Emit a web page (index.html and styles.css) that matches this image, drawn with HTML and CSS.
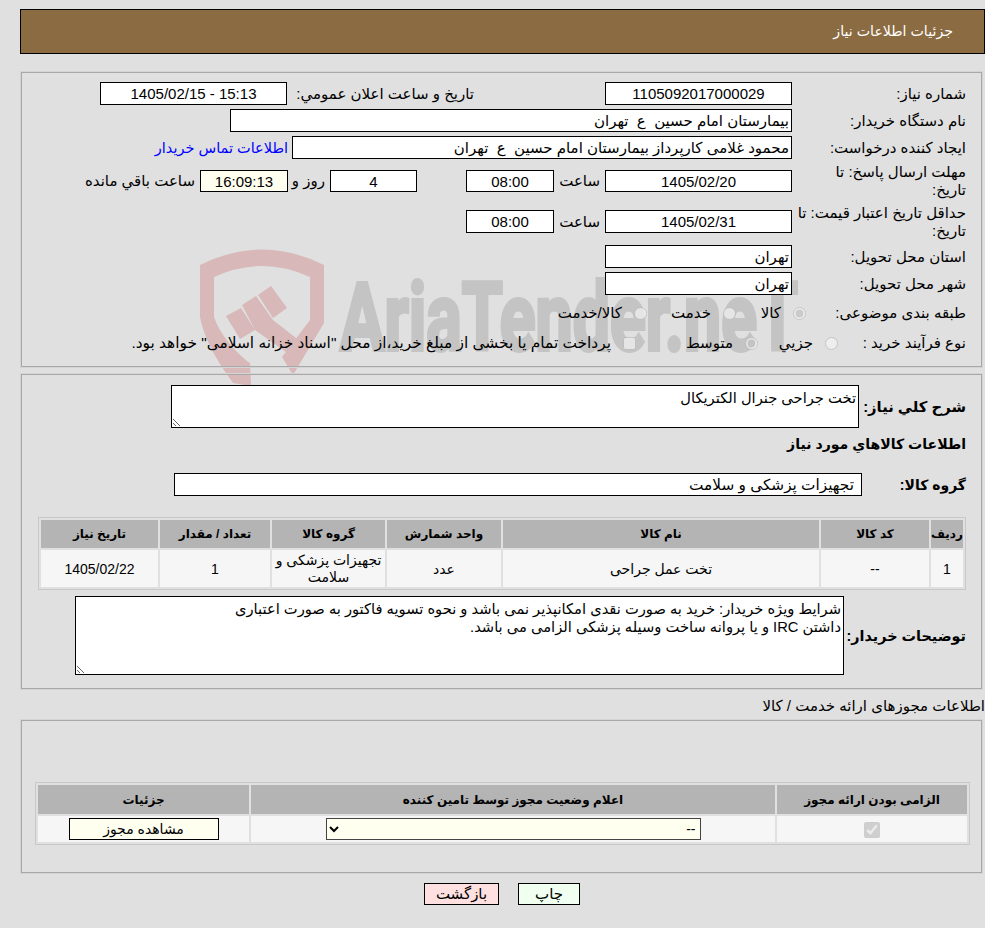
FILE: index.html
```html
<!DOCTYPE html>
<html lang="fa" dir="rtl">
<head>
<meta charset="utf-8">
<title>جزئیات اطلاعات نیاز</title>
<link rel="stylesheet" href="styles.css">
</head>
<body>
<div class="page">
  <svg class="watermark" width="985" height="400" viewBox="0 0 985 400" aria-hidden="true">
    <path class="wm-red" d="M200 265 Q262 234 324 265 V323 L293 375 L282 357 L310 320 V277 Q262 255 214 277 V317 Q222 340 248 362 L250 363 L251 386 L233 383 Q205 345 200 317 Z"/>
    <path class="wm-red" d="M226 316 L241 308 L255 330 L240 339 Z M258 295 L271 286 L287 308 L273 318 Z M242 305 L256 296 L273 320 L305 345 L293 357 L255 330 Z"/>
    <text class="wm-text" x="340" y="350" textLength="458" lengthAdjust="spacingAndGlyphs" direction="ltr">AriaTender.neT</text>
  </svg>

  <header class="title-bar">جزئيات اطلاعات نياز</header>

  <section class="panel panel-main">
    <div class="row row-a">
      <span class="lbl">شماره نياز:</span>
      <input class="fld w187" value="1105092017000029" readonly>
      <span class="lbl-public">تاريخ و ساعت اعلان عمومي:</span>
      <input class="fld w187" value="15:13 - 1405/02/15" readonly>
    </div>
    <div class="row row-b">
      <span class="lbl">نام دستگاه خريدار:</span>
      <input class="fld fld-start w562" value="بیمارستان امام حسین  ع  تهران" readonly>
    </div>
    <div class="row row-b">
      <span class="lbl">ایجاد کننده درخواست:</span>
      <input class="fld fld-start w500" value="محمود غلامی کارپرداز بیمارستان امام حسین  ع  تهران" readonly>
      <a class="contact" href="#">اطلاعات تماس خريدار</a>
    </div>
    <div class="row row-c">
      <span class="lbl">مهلت ارسال پاسخ: تا<br>تاريخ:</span>
      <input class="fld w187" value="1405/02/20" readonly>
      <span class="hour">ساعت</span>
      <input class="fld w88" value="08:00" readonly>
      <input class="fld w87 gap-days" value="4" readonly>
      <span class="days">روز و</span>
      <input class="fld w88 timer" value="16:09:13" readonly>
      <span class="remain">ساعت باقي مانده</span>
    </div>
    <div class="row row-d">
      <span class="lbl">حداقل تاريخ اعتبار قيمت: تا<br>تاريخ:</span>
      <input class="fld w187" value="1405/02/31" readonly>
      <span class="hour">ساعت</span>
      <input class="fld w88" value="08:00" readonly>
    </div>
    <div class="row row-e">
      <span class="lbl">استان محل تحويل:</span>
      <input class="fld fld-start w187" value="تهران" readonly>
    </div>
    <div class="row row-b">
      <span class="lbl">شهر محل تحويل:</span>
      <input class="fld fld-start w187" value="تهران" readonly>
    </div>
    <div class="row row-f">
      <span class="lbl lbl-cat">طبقه بندی موضوعی:</span>
      <label class="opt w70"><input type="radio" name="cat" checked disabled>کالا</label>
      <label class="opt w89"><input type="radio" name="cat" disabled>خدمت</label>
      <label class="opt"><input type="radio" name="cat" disabled>کالا/خدمت</label>
    </div>
    <div class="row row-g">
      <span class="lbl lbl-short">نوع فرآیند خرید :</span>
      <label class="opt w80"><input type="radio" name="proc" disabled>جزيي</label>
      <label class="opt w122"><input type="radio" name="proc" checked disabled>متوسط</label>
      <label class="opt opt-long"><input type="checkbox" disabled>پرداخت تمام یا بخشی از مبلغ خرید،از محل "اسناد خزانه اسلامی" خواهد بود.</label>
    </div>
  </section>

  <section class="panel panel-goods">
    <div class="row-area">
      <span class="lbl-bold col107">شرح كلي نياز:</span>
      <textarea class="area area-desc" readonly>تخت جراحی جنرال الکتریکال</textarea>
    </div>
    <div class="heading">اطلاعات كالاهاي مورد نياز</div>
    <div class="row-group">
      <span class="lbl-bold col104">گروه کالا:</span>
      <input class="fld fld-group" value="تجهیزات پزشکی و سلامت" readonly>
    </div>
    <table class="grid grid-goods">
      <thead>
        <tr>
          <th class="c32">ردیف</th>
          <th class="c108">کد کالا</th>
          <th class="c316">نام کالا</th>
          <th class="c114">واحد شمارش</th>
          <th class="c113">گروه کالا</th>
          <th class="c110">تعداد / مقدار</th>
          <th class="c117">تاریخ نیاز</th>
        </tr>
      </thead>
      <tbody>
        <tr>
          <td>1</td>
          <td>--</td>
          <td>تخت عمل جراحی</td>
          <td>عدد</td>
          <td>تجهیزات پزشکی و سلامت</td>
          <td>1</td>
          <td>1405/02/22</td>
        </tr>
      </tbody>
    </table>
    <div class="row-notes">
      <span class="lbl-bold col122">توضیحات خریدار:</span>
      <textarea class="area area-notes" readonly>شرایط ویژه خریدار: خرید به صورت نقدی امکانپذیر نمی باشد و نحوه تسویه فاکتور به صورت اعتباری
داشتن IRC و یا پروانه ساخت وسیله پزشکی الزامی می باشد.</textarea>
    </div>
  </section>

  <div class="section-label">اطلاعات مجوزهای ارائه خدمت / کالا</div>

  <section class="panel panel-license">
    <table class="grid grid-license">
      <thead>
        <tr>
          <th class="c190">الزامی بودن ارائه مجوز</th>
          <th class="c524">اعلام وضعیت مجوز توسط تامین کننده</th>
          <th class="c211">جزئیات</th>
        </tr>
      </thead>
      <tbody>
        <tr>
          <td><input type="checkbox" checked disabled></td>
          <td><select class="status"><option>--</option></select></td>
          <td><button class="btn btn-view" type="button">مشاهده مجوز</button></td>
        </tr>
      </tbody>
    </table>
  </section>

  <div class="actions">
    <button class="btn btn-print" type="button">چاپ</button>
    <button class="btn btn-back" type="button">بازگشت</button>
  </div>
</div>
</body>
</html>
```
FILE: styles.css
```css
* { box-sizing: border-box; }
html, body { margin: 0; padding: 0; background: #e0e0e0; }
body {
  font-family: "Liberation Sans", "DejaVu Sans", sans-serif;
  font-size: 15px;
  color: #000;
  overflow: hidden;
}
.page { position: relative; width: 985px; height: 928px; padding-top: 9px; }
.watermark { position: absolute; left: 0; top: 0; z-index: 0; }
.wm-red { fill: #d8b8b8; }
.wm-text {
  font-family: "Roboto", sans-serif;
  font-weight: 700;
  font-size: 94px;
  fill: #c4c4c4;
  stroke: #c4c4c4;
  stroke-width: 4px;
}
.title-bar {
  position: relative;
  z-index: 1;
  height: 45px;
  width: 965px;
  margin-left: 20px;
  padding-right: 31px;
  background: #8b6b41;
  border: 1px solid #000;
  color: #fff;
  line-height: 43px;
  font-size: 14.2px;
}
.panel {
  position: relative;
  z-index: 1;
  width: 961px;
  margin-right: 3px;
  margin-left: 21px;
  border: 1px solid #a8a8a8;
  box-shadow: 0 0 0 1px #d4d4d4;
}
.panel-main { height: 295px; margin-top: 18px; padding: 9px 14px 0 0; }
.panel-goods { height: 315px; margin-top: 7px; padding: 10px 14px 0 0; }
.panel-license { height: 153px; padding: 61px 11px 0 0; }

.row { display: flex; align-items: center; height: 23px; }
.row-b { margin-top: 4px; }
.row-c { margin-top: 11px; height: 22px; }
.row-d { margin-top: 18px; }
.row-e { margin-top: 12px; }
.row-f { margin-top: 6px; height: 24px; }
.row-g { margin-top: 6px; height: 24px; }
.lbl { width: 175px; flex: none; padding: 0 1px 0 0; line-height: 18px; }
.lbl-cat { width: 160px; }
.lbl-short { width: 128px; }
.lbl-public { width: 187px; margin-right: 131px; flex: none; }

.fld {
  height: 100%;
  border: 1px solid #000;
  background: #fff;
  color: #000;
  font: inherit;
  text-align: center;
  padding: 0 2px;
  margin: 0;
  outline: none;
  border-radius: 0;
  flex: none;
}
.fld-start { text-align: right; }
.w187 { width: 187px; }
.w562 { width: 562px; }
.w500 { width: 500px; }
.w88 { width: 88px; }
.w87 { width: 87px; }
.gap-days { margin-right: 49px; }
.timer { background: #fffff0; }
.hour { width: 51px; padding-right: 5px; flex: none; }
.days { width: 42px; padding-right: 5px; flex: none; }
.remain { padding-right: 5px; }
.contact { color: #0000ff; text-decoration: none; margin-right: 4px; font-size: 14.5px; }

.opt { display: flex; align-items: center; flex: none; }
.opt input { margin: 0 1px 0 12px; width: 13px; height: 13px; flex: none; }
.opt-long { font-size: 15.4px; }
.w70 { width: 70px; }
.w89 { width: 89px; }
.w80 { width: 80px; }
.w122 { width: 122px; }

.lbl-bold { font-weight: 700; font-size: 14.3px; flex: none; padding-right: 1px; white-space: nowrap; }
.col107 { width: 108px; font-size: 14.8px; }
.col104 { width: 105px; font-size: 14px; }
.col122 { width: 123px; font-size: 14.4px; }
.row-area { display: flex; align-items: center; }
.area {
  display: block;
  border: 1px solid #000;
  background: #fff;
  font: inherit;
  font-size: 14.7px;
  color: #000;
  padding: 3px 2px 2px;
  margin: 0;
  outline: none;
  border-radius: 0;
  flex: none;
}
.area-desc { width: 688px; height: 43px; }
.area-notes { width: 769px; height: 79px; line-height: 18px; }
.heading { font-weight: 700; font-size: 14.1px; height: 20px; margin-top: 6px; line-height: 20px; padding-right: 1px; }
.row-group { display: flex; align-items: center; height: 23px; margin-top: 19px; }
.fld-group { width: 688px; text-align: right; padding-right: 7px; font-size: 15.3px; }

.grid {
  border: 1px solid #c8c8c8;
  border-spacing: 2px;
  border-collapse: separate;
  table-layout: fixed;
  background: #e0e0e0;
}
.grid th { background: #b4b4b4; font-weight: 700; font-size: 12px; text-align: center; padding: 0; }
.grid td { background: #f6f6f6; text-align: center; padding: 1px 0 0; line-height: 17px; font-size: 14px; }
.grid-goods { width: 928px; margin-top: 21px; margin-right: 1px; }
.grid-goods th { height: 28px; }
.grid-goods td { height: 37px; }
.grid-license { width: 935px; }
.grid-license th { height: 29px; }
.grid-license td { height: 26px; padding: 0; }
.grid-license input { margin: 0; width: 16px; height: 16px; vertical-align: middle; }
.c32 { width: 32px; } .c108 { width: 108px; } .c316 { width: 316px; }
.c114 { width: 114px; } .c113 { width: 113px; } .c110 { width: 110px; } .c117 { width: 117px; }
.c190 { width: 190px; } .c524 { width: 524px; } .c211 { width: 211px; }

.row-notes { display: flex; align-items: center; margin-top: 6px; }
.section-label { position: relative; z-index: 1; height: 31px; line-height: 33px; }

.status {
  display: block;
  width: 375px;
  height: 22px;
  margin: 0 auto;
  font: inherit;
  background: #fffff0;
  border: 1px solid #444;
  border-radius: 0;
}
.btn {
  height: 22px;
  border: 1px solid #000;
  font: inherit;
  color: #000;
  padding: 0;
  border-radius: 0;
  display: block;
}
.btn-view { width: 150px; margin: 0 auto; background: #fffff0; }
.actions {
  position: relative;
  z-index: 1;
  display: flex;
  justify-content: center;
  gap: 19px;
  margin-top: 10px;
  padding-left: 19px;
}
.btn-print { width: 62px; background: #f0fff0; }
.btn-back { width: 75px; background: #ffe0e0; }
```
